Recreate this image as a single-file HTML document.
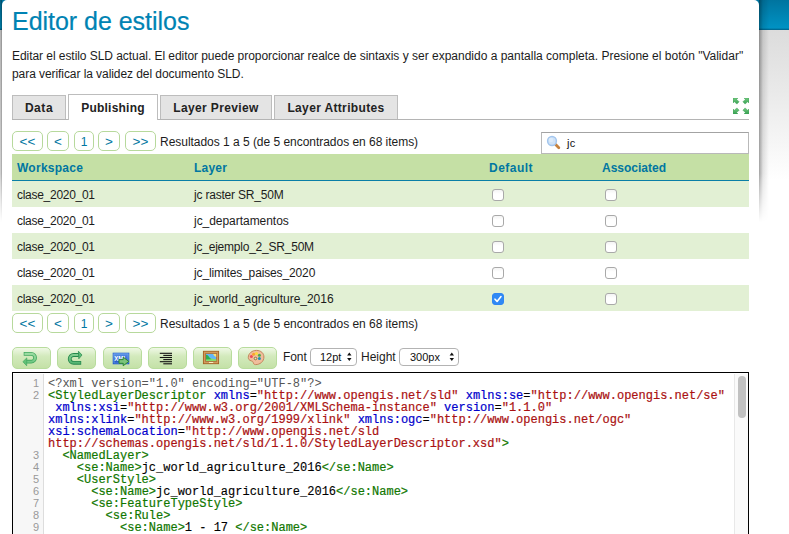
<!DOCTYPE html>
<html lang="es">
<head>
<meta charset="utf-8">
<title>Editor de estilos</title>
<style>
*{box-sizing:border-box;}
html,body{margin:0;padding:0;}
body{width:789px;height:534px;overflow:hidden;background:#fff;position:relative;
  font-family:"Liberation Sans",sans-serif;font-size:12px;color:#222;}
#hdr{position:absolute;left:0;top:0;width:789px;height:30px;
  background:linear-gradient(#00749f 0%,#0092c3 93%,#005f85 100%);}
#fade{position:absolute;left:0;top:30px;width:789px;height:150px;
  background:linear-gradient(#dcdcdc 0%,#e9e9e9 40%,#fff 100%);}
#shR{position:absolute;left:759px;top:0;width:10px;height:222px;
  background:linear-gradient(90deg,rgba(0,0,0,.36),rgba(0,0,0,.10) 40%,rgba(0,0,0,0));
  -webkit-mask-image:linear-gradient(#000 0,#000 78%,transparent 100%);mask-image:linear-gradient(#000 0,#000 78%,transparent 100%);}
#shL{position:absolute;left:0;top:0;width:2px;height:222px;
  background:linear-gradient(90deg,rgba(0,0,0,.12),rgba(0,0,0,.36));
  -webkit-mask-image:linear-gradient(#000 0,#000 78%,transparent 100%);mask-image:linear-gradient(#000 0,#000 78%,transparent 100%);}
#main{position:absolute;left:2px;top:0;width:757px;height:534px;background:#fff;border-radius:5px 5px 0 0;}
h1{position:absolute;left:12px;top:7px;margin:0;font-weight:normal;font-size:25px;line-height:28px;color:#0083b3;letter-spacing:-.03px;-webkit-text-stroke:.2px #0083b3;white-space:nowrap;}
p.d{position:absolute;left:12px;margin:0;line-height:18px;white-space:nowrap;color:#1c1c1c;}

/* tabs */
.tab{position:absolute;top:95px;height:25px;background:#e4e4e4;border:1px solid #bdbdbd;border-bottom:none;font-weight:bold;color:#222;text-align:center;line-height:24px;white-space:nowrap;}
.tab.on{top:94px;height:26px;background:#fff;line-height:26px;z-index:2;}
#tabline{position:absolute;left:12px;top:119px;width:737px;height:1px;background:#b4b4b4;}
/* paging */
.pg{position:absolute;height:20px;border:1px solid #b7d99c;border-radius:5px;background:#fff;color:#0076a1;text-align:center;line-height:20px;white-space:nowrap;}
.pg.a{font-size:13.5px;line-height:19px;}
.res{position:absolute;left:160px;white-space:nowrap;line-height:18px;color:#1c1c1c;letter-spacing:-.03px;}
#q{position:absolute;left:541px;top:132px;width:208px;height:22px;border:1px solid #b9b9b9;border-top-color:#a3a3a3;background:#fff;}
#q span{position:absolute;left:25px;top:3px;line-height:14px;font-size:11px;letter-spacing:.3px;color:#111;}
/* table */
#th{position:absolute;left:12px;top:154px;width:737px;height:27px;background:#c5e0a5;border-bottom:1px solid #0a7fa6;}
#th b{position:absolute;top:1px;line-height:26px;color:#0076a1;white-space:nowrap;}
.tr{position:absolute;left:12px;width:737px;height:26px;}
.tr.o{background:#e2f0d4;}
.tr span{position:absolute;top:1px;line-height:27px;white-space:nowrap;color:#1c1c1c;}
.cb{position:absolute;top:8px;width:12px;height:12px;border:1px solid #a9a9a9;border-radius:3px;background:linear-gradient(#f4f4f4,#fff 40%);}
.cb.ck{border-color:#2f86f3;background:#3089f5;}


/* toolbar */
.tb{position:absolute;top:347px;width:39px;height:22px;border:1px solid #b8dc9d;border-radius:5px;background:linear-gradient(#eff8e6 0%,#d3eabd 40%,#c4e1a7 100%);}
#ico{position:absolute;left:0;top:340px;}
.lbl{position:absolute;top:348px;line-height:18px;color:#1c1c1c;white-space:nowrap;}
.sel{position:absolute;top:348px;height:18px;border:1px solid #b3b3b3;border-radius:4px;background:#fff;font-size:11px;line-height:16px;color:#111;white-space:nowrap;}
.sel span{position:absolute;top:0;}

/* editor */
#ed{position:absolute;left:12px;top:372px;width:737px;height:170px;border:1px solid #000;background:#fff;overflow:hidden;}
#gut{position:absolute;left:0;top:1px;width:31px;height:170px;background:#f7f7f7;border-right:1px solid #ddd;}
#ed .ln{position:absolute;left:0;width:26px;text-align:right;color:#999;font-size:11px;line-height:12px;height:12px;}
#code{position:absolute;left:35px;top:5px;margin:0;font-family:"Liberation Mono",monospace;font-size:12px;line-height:12px;color:#000;white-space:pre;-webkit-text-stroke:.12px #000;}
#code .m{color:#555;-webkit-text-stroke:0;} #code .t{color:#117700;-webkit-text-stroke:.2px #117700;} #code .a{color:#0000cc;-webkit-text-stroke:.2px #0000cc;} #code .s{color:#aa1111;-webkit-text-stroke:.2px #aa1111;}
#sb{position:absolute;left:721px;top:1px;width:14px;height:170px;background:#fafafa;border-left:1px solid #e8e8e8;}
#sb i{position:absolute;left:3px;top:2px;width:8px;height:42px;border-radius:4px;background:#c1c1c1;}
</style>
</head>
<body>
<div id="hdr"></div>
<div id="fade"></div>
<div id="shR"></div>
<div id="shL"></div>
<div id="main"></div>
<h1>Editor de estilos</h1>
<p class="d" style="top:47px" id="l1"><span style="letter-spacing:-.056px">Editar el estilo SLD actual. El editor puede proporcionar realce de sintaxis</span> y ser expandido a pantalla completa. Presione el botón "Validar"</p>
<p class="d" style="top:65px;letter-spacing:-.07px" id="l2">para verificar la validez del documento SLD.</p>

<div class="tab" style="left:12px;width:54px;letter-spacing:.55px">Data</div>
<div class="tab on" style="left:68px;width:90px;letter-spacing:.23px">Publishing</div>
<div class="tab" style="left:160px;width:112px;letter-spacing:.37px">Layer Preview</div>
<div class="tab" style="left:274px;width:124px;letter-spacing:.35px">Layer Attributes</div>
<div id="tabline"></div>
<svg id="fs" style="position:absolute;left:733px;top:98px" width="16" height="16" viewBox="0 0 16.2 16.2">
<defs><linearGradient id="gf" x1="0" y1="0" x2="0" y2="1"><stop offset="0" stop-color="#74cb80"/><stop offset="1" stop-color="#37a052"/></linearGradient></defs>
<g fill="url(#gf)" stroke="#3fa257" stroke-width=".5" stroke-linejoin="round">
<path id="ar" d="M0,0 L5,0 L3.7,1.4 L6.2,3.9 L3.9,6.2 L1.4,3.7 L0,5 Z"/>
<path d="M16.2,0 L11.2,0 L12.5,1.4 L10,3.9 L12.3,6.2 L14.8,3.7 L16.2,5 Z"/>
<path d="M0,16.2 L5,16.2 L3.7,14.8 L6.2,12.3 L3.9,10 L1.4,12.5 L0,11.2 Z"/>
<path d="M16.2,16.2 L11.2,16.2 L12.5,14.8 L10,12.3 L12.3,10 L14.8,12.5 L16.2,11.2 Z"/>
</g></svg>

<div class="pg a" style="left:12px;top:131px;width:31px">&lt;&lt;</div>
<div class="pg a" style="left:47px;top:131px;width:22px">&lt;</div>
<div class="pg" style="left:74px;top:131px;width:20px">1</div>
<div class="pg a" style="left:98px;top:131px;width:22px">&gt;</div>
<div class="pg a" style="left:125px;top:131px;width:31px">&gt;&gt;</div>
<div class="res" style="top:133px">Resultados 1 a 5 (de 5 encontrados en 68 items)</div>
<div id="q"><span>jc</span></div>

<div id="th"><b style="left:5px;letter-spacing:.26px">Workspace</b><b style="left:182px;letter-spacing:.2px">Layer</b><b style="left:477px;letter-spacing:.48px">Default</b><b style="left:590px">Associated</b></div>
<div class="tr o" style="top:181px"><span style="left:5px;letter-spacing:-.28px">clase_2020_01</span><span style="left:182px;letter-spacing:-0.2px">jc raster SR_50M</span><i class="cb" style="left:480px"></i><i class="cb" style="left:593px"></i></div>
<div class="tr" style="top:207px"><span style="left:5px;letter-spacing:-.28px">clase_2020_01</span><span style="left:182px;letter-spacing:-0.04px">jc_departamentos</span><i class="cb" style="left:480px"></i><i class="cb" style="left:593px"></i></div>
<div class="tr o" style="top:233px"><span style="left:5px;letter-spacing:-.28px">clase_2020_01</span><span style="left:182px;letter-spacing:-0.22px">jc_ejemplo_2_SR_50M</span><i class="cb" style="left:480px"></i><i class="cb" style="left:593px"></i></div>
<div class="tr" style="top:259px"><span style="left:5px;letter-spacing:-.28px">clase_2020_01</span><span style="left:182px;letter-spacing:-0.13px">jc_limites_paises_2020</span><i class="cb" style="left:480px"></i><i class="cb" style="left:593px"></i></div>
<div class="tr o" style="top:285px"><span style="left:5px;letter-spacing:-.28px">clase_2020_01</span><span style="left:182px;letter-spacing:-0.02px">jc_world_agriculture_2016</span><i class="cb ck" style="left:480px"><svg width="12" height="12" viewBox="0 0 12 12" style="position:absolute;left:-1px;top:-1px"><path d="M3,6.2 L5.1,8.4 L9,3.6" fill="none" stroke="#fff" stroke-width="1.6" stroke-linecap="round" stroke-linejoin="round"/></svg></i><i class="cb" style="left:593px"></i></div>

<div class="pg a" style="left:12px;top:313px;width:31px">&lt;&lt;</div>
<div class="pg a" style="left:47px;top:313px;width:22px">&lt;</div>
<div class="pg" style="left:74px;top:313px;width:20px">1</div>
<div class="pg a" style="left:98px;top:313px;width:22px">&gt;</div>
<div class="pg a" style="left:125px;top:313px;width:31px">&gt;&gt;</div>
<div class="res" style="top:315px">Resultados 1 a 5 (de 5 encontrados en 68 items)</div>

<svg id="mag" style="position:absolute;left:541px;top:132px" width="24" height="22" viewBox="541 132 24 22">
<line x1="555.6" y1="144.6" x2="558.8" y2="147.8" stroke="#c5813e" stroke-width="2.8" stroke-linecap="round"/>
<circle cx="552" cy="141" r="4.4" fill="#cfe2f7" stroke="#a3c6ee" stroke-width="1.5"/>
<circle cx="551" cy="140" r="2.2" fill="#dcebfa"/>
</svg>

<div class="tb" style="left:12px"></div>
<div class="tb" style="left:57px"></div>
<div class="tb" style="left:103px"></div>
<div class="tb" style="left:148px"></div>
<div class="tb" style="left:193px"></div>
<div class="tb" style="left:238px"></div>
<svg id="ico" width="290" height="32" viewBox="0 340 290 32">
<defs>
<linearGradient id="g1" gradientUnits="userSpaceOnUse" x1="0" y1="352" x2="0" y2="364"><stop offset="0" stop-color="#a2dfa6"/><stop offset="1" stop-color="#66c37c"/></linearGradient>
<linearGradient id="g2" gradientUnits="userSpaceOnUse" x1="0" y1="353" x2="0" y2="365"><stop offset="0" stop-color="#8ad296"/><stop offset="1" stop-color="#4bb06c"/></linearGradient>
<linearGradient id="g3" x1="0" y1="0" x2="0" y2="1"><stop offset="0" stop-color="#5d96e8"/><stop offset="1" stop-color="#1b4fc2"/></linearGradient>
</defs>
<g fill="none" stroke-linecap="butt"><path d="M23.7,353.9 H31.2 A3.9,3.9 0 0 1 31.2,361.7 H26" stroke="#41a85e" stroke-width="3.7"/><path d="M24.4,353.9 H31.2 A3.9,3.9 0 0 1 31.2,361.7 H26" stroke="url(#g1)" stroke-width="2.1"/></g>
<path d="M26.8,357.9 L22.9,361.7 L26.7,365.8 Z" fill="#62c076" stroke="#41a85e" stroke-width=".7" stroke-linejoin="round"/>
<g fill="none" stroke-linecap="butt"><path d="M78.8,355 H73.6 A3.9,3.9 0 0 0 73.6,362.8 H81.2" stroke="#25884c" stroke-width="3.8"/><path d="M78.8,355 H73.6 A3.9,3.9 0 0 0 73.6,362.8 H80.5" stroke="url(#g2)" stroke-width="2.1"/></g>
<path d="M78.4,351.2 L82,355 L78.8,358.8 Z" fill="#5cbb78" stroke="#25884c" stroke-width=".7" stroke-linejoin="round"/>
<rect x="113" y="353" width="16" height="11" fill="url(#g3)" stroke="#2a62cf" stroke-width=".6"/>
<rect x="114" y="354" width="14" height="9" fill="none" stroke="#7aa8ee" stroke-width=".6"/>
<text x="114.2" y="361" font-family="Liberation Sans, sans-serif" font-weight="bold" font-size="6.6" fill="#fff" textLength="12.6" lengthAdjust="spacingAndGlyphs">XML</text>
<path d="M119,359.6 H123.2 V357.2 L128.8,361.4 L123.2,365.8 V363.3 H119 Z" fill="#7cc47c" stroke="#2c8a2c" stroke-width="1" stroke-linejoin="round"/>
<g stroke="#111" stroke-width="1.1">
<line x1="159.8" y1="353.3" x2="172" y2="353.3"/><line x1="163.3" y1="355.4" x2="172" y2="355.4"/>
<line x1="159.8" y1="357.5" x2="172" y2="357.5"/><line x1="163.3" y1="359.6" x2="172" y2="359.6"/>
<line x1="159.8" y1="361.7" x2="172" y2="361.7"/><line x1="163.3" y1="363.8" x2="172" y2="363.8"/>
</g>
<rect x="203.4" y="351.3" width="15.2" height="12.4" fill="#d29a5c" stroke="#a4601f" stroke-width=".9"/>
<rect x="205.6" y="353.5" width="11" height="7.9" fill="#63b6f6" stroke="#b0702e" stroke-width=".8"/>
<path d="M206,361 V355 C207.5,354.6 208.5,356 209.3,357.2 C210.5,358.3 212,359 216.2,359.2 V361 Z" fill="#86de6c"/>
<path d="M206,359.6 V354.8 C207.6,354.8 208.6,356.2 209.4,357.4 C210,358.2 210.8,358.8 211.6,359.2 Z" fill="#2caf52"/>
<path d="M213.2,354 H216.2 V357 C214.6,356.6 213.6,355.4 213.2,354 Z" fill="#ffe06a"/>
<rect x="209" y="362.1" width="4.2" height=".9" fill="#fff6d0"/>
<path d="M248.3,357.6 C248.3,353.4 252,350.4 256.4,350.4 C261,350.4 263.9,353.2 263.9,357 C263.9,361.6 260,364.6 255.6,364.6 C253.8,364.6 253.4,363.4 253.2,362.4 C253,361.4 252.2,361.2 251,360.8 C249.4,360.2 248.3,359.4 248.3,357.6 Z" fill="#f0bd9c" stroke="#c4865a" stroke-width="1"/>
<circle cx="251.4" cy="356.4" r="1.5" fill="#ee4a58"/>
<circle cx="253.6" cy="354.3" r="1.5" fill="#f7a42c"/>
<circle cx="256.5" cy="353.4" r="1.5" fill="#fbdc3a"/>
<circle cx="259.4" cy="355.2" r="1.5" fill="#4fae46"/>
<circle cx="259.4" cy="358.5" r="1.5" fill="#1e8fb8"/>
<circle cx="255.5" cy="358.5" r="1.3" fill="#d8f0c0" stroke="#8a6a34" stroke-width=".9"/>
</svg>
<div class="lbl" style="left:283px;letter-spacing:-.1px">Font</div>
<div class="sel" style="left:310px;width:47px"><span style="left:9px">12pt</span></div>
<div class="lbl" style="left:361px;letter-spacing:0">Height</div>
<div class="sel" style="left:399px;width:60px"><span style="left:10px">300px</span></div>

<svg style="position:absolute;left:345px;top:350px" width="10" height="14" viewBox="345 350 10 14"><path d="M347.1,355.6 L349.3,352.6 L351.5,355.6 Z M347.1,358 L349.3,361 L351.5,358 Z" fill="#111"/></svg>
<svg style="position:absolute;left:447px;top:350px" width="10" height="14" viewBox="447 350 10 14"><path d="M449.6,355.6 L451.8,352.6 L454,355.6 Z M449.6,358 L451.8,361 L454,358 Z" fill="#111"/></svg>
<div id="ed"><div id="gut"></div><div class="ln" style="top:4px">1</div><div class="ln" style="top:16px">2</div><div class="ln" style="top:76px">3</div><div class="ln" style="top:88px">4</div><div class="ln" style="top:100px">5</div><div class="ln" style="top:112px">6</div><div class="ln" style="top:124px">7</div><div class="ln" style="top:136px">8</div><div class="ln" style="top:148px">9</div><pre id="code"><span class="m">&lt;?xml version="1.0" encoding="UTF-8"?&gt;</span>
<span class="t">&lt;StyledLayerDescriptor</span> <span class="a">xmlns</span>=<span class="s">"http://www.opengis.net/sld"</span> <span class="a">xmlns:se</span>=<span class="s">"http://www.opengis.net/se"</span>
 <span class="a">xmlns:xsi</span>=<span class="s">"http://www.w3.org/2001/XMLSchema-instance"</span> <span class="a">version</span>=<span class="s">"1.1.0"</span>
<span class="a">xmlns:xlink</span>=<span class="s">"http://www.w3.org/1999/xlink"</span> <span class="a">xmlns:ogc</span>=<span class="s">"http://www.opengis.net/ogc"</span>
<span class="a">xsi:schemaLocation</span>=<span class="s">"http://www.opengis.net/sld</span>
<span class="s">http://schemas.opengis.net/sld/1.1.0/StyledLayerDescriptor.xsd"</span><span class="t">&gt;</span>
  <span class="t">&lt;NamedLayer&gt;</span>
    <span class="t">&lt;se:Name&gt;</span>jc_world_agriculture_2016<span class="t">&lt;/se:Name&gt;</span>
    <span class="t">&lt;UserStyle&gt;</span>
      <span class="t">&lt;se:Name&gt;</span>jc_world_agriculture_2016<span class="t">&lt;/se:Name&gt;</span>
      <span class="t">&lt;se:FeatureTypeStyle&gt;</span>
        <span class="t">&lt;se:Rule&gt;</span>
          <span class="t">&lt;se:Name&gt;</span>1 - 17 <span class="t">&lt;/se:Name&gt;</span></pre><div id="sb"><i></i></div></div>
</body>
</html>
